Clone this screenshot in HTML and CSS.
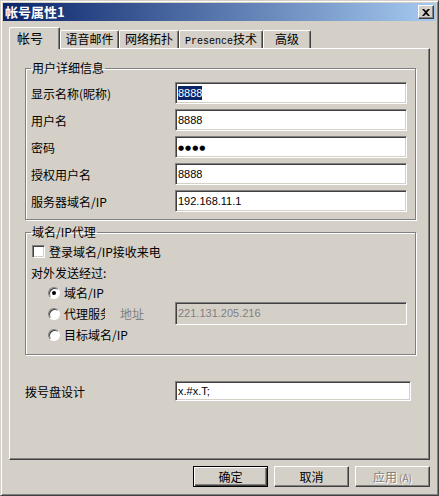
FILE: index.html
```html
<!doctype html>
<html lang="zh-CN">
  <head>
    <meta charset="UTF-8" />
    <title>帐号属性1</title>
    <link rel="stylesheet" href="styles.css">
  </head>
  <body>
    <div class="window">
      <div class="titlebar">
        <span class="title">帐号属性1</span>
        <span class="close">
          <svg width="8" height="7" viewBox="0 0 8 7"><path d="M0 0h2l2 2 2-2h2L5 3.5 8 7H6L4 5 2 7H0l3-3.5z" fill="#000"/></svg>
        </span>
      </div>
      <div class="content">
        <div class="tabs">
          <div class="tab active">帐号</div>
          <div class="tab t2">语音邮件</div>
          <div class="tab t3">网络拓扑</div>
          <div class="tab t4"><span class="mono">Presence</span>技术</div>
          <div class="tab t5">高级</div>
        </div>
        <div class="panel">
          <fieldset class="group first">
            <legend>用户详细信息</legend>
            <div class="rows">
              <label>显示名称(昵称)</label>
              <div class="field"><span class="selected">8888</span></div>
              <label>用户名</label>
              <div class="field">8888</div>
              <label>密码</label>
              <div class="field"><span class="dots">●●●●</span></div>
              <label>授权用户名</label>
              <div class="field">8888</div>
              <label>服务器域名/IP</label>
              <div class="field">192.168.11.1</div>
            </div>
          </fieldset>
          <fieldset class="group second">
            <legend>域名/IP代理</legend>
            <div class="check-row">
              <span class="checkbox"></span>
              <span>登录域名/IP接收来电</span>
            </div>
            <div class="send-label">对外发送经过:</div>
            <div class="radio-row">
              <span class="radio checked"></span>
              <span>域名/IP</span>
            </div>
            <div class="radio-row">
              <span class="radio"></span>
              <span class="clip">代理服务器</span>
              <span class="muted">地址</span>
              <div class="field disabled">221.131.205.216</div>
            </div>
            <div class="radio-row">
              <span class="radio"></span>
              <span>目标域名/IP</span>
            </div>
          </fieldset>
          <div class="dial-row">
            <label>拨号盘设计</label>
            <div class="field short">x.#x.T;</div>
          </div>
        </div>
        <div class="buttons">
          <button class="default">确定</button>
          <button>取消</button>
          <button class="disabled-btn">应用<small>(A)</small></button>
        </div>
      </div>
    </div>
  </body>
</html>
```
FILE: styles.css
```css
* {
  box-sizing: border-box;
}
body {
  margin: 0;
  font-family: "Noto Sans CJK SC", "Liberation Sans", sans-serif;
  font-size: 12px;
  color: #000;
  background: #d4d0c8;
}
.window {
  width: 439px;
  height: 496px;
  background: #d4d0c8;
  border: 1px solid;
  border-color: #d4d0c8 #404040 #404040 #d4d0c8;
  box-shadow: inset 1px 1px #fff, inset -1px -1px #808080;
  padding: 2px;
  display: flex;
  flex-direction: column;
}
.titlebar {
  height: 18px;
  display: flex;
  align-items: center;
  justify-content: space-between;
  background: linear-gradient(to right, #0a246a, #a6caf0);
  padding: 0 2px 0 2px;
}
.title {
  color: #fff;
  font-weight: bold;
  font-size: 13px;
  line-height: 18px;
}
.close {
  width: 16px;
  height: 14px;
  display: flex;
  align-items: center;
  justify-content: center;
  background: #d4d0c8;
  border: 1px solid;
  border-color: #fff #404040 #404040 #fff;
  box-shadow: inset -1px -1px #808080;
}
.content {
  padding: 6px 6px 0 6px;
}
.tabs {
  display: flex;
  align-items: flex-end;
  height: 21px;
}
.tab {
  height: 18px;
  line-height: 16px;
  font-size: 12px;
  text-align: center;
  white-space: nowrap;
  border-top: 1px solid #fff;
  border-left: 1px solid #fff;
  border-right: 1px solid #404040;
  border-radius: 2px 2px 0 0;
  box-shadow: inset -1px 0 #808080;
}
.tab.active {
  width: 51px;
  height: 22px;
  margin-bottom: -1px;
  position: relative;
  z-index: 1;
  background: #d4d0c8;
  font-size: 13px;
  line-height: 19px;
  text-align: left;
  padding-left: 7px;
}
.mono {
  font-family: "Liberation Mono", monospace;
  font-size: 10px;
}
.t2 {
  width: 59px;
}
.t3 {
  width: 60px;
}
.t4 {
  width: 84px;
}
.t5 {
  width: 48px;
}
.panel {
  height: 412px;
  border: 1px solid;
  border-color: #fff #404040 #404040 #fff;
  box-shadow: inset -1px -1px #808080;
  padding-top: 12px;
}
.group {
  margin: 0 13px 0 15px;
  border: 1px solid #808080;
  box-shadow: 1px 1px 0 #fff, inset 1px 1px 0 #fff;
  min-inline-size: 0;
}
.group legend {
  padding: 0 1px;
  line-height: 14px;
  font-size: 12px;
}
.group.first {
  padding: 7px 8px 7px 5px;
}
.group.second {
  margin-top: 5px;
  padding: 4px 8px 9px 5px;
}
.rows {
  display: grid;
  grid-template-columns: 144px 1fr;
  row-gap: 5px;
  align-items: center;
}
.field {
  height: 22px;
  background: #fff;
  border: 1px solid;
  border-color: #808080 #fff #fff #808080;
  box-shadow: inset 1px 1px #404040, inset -1px -1px #d4d0c8;
  font-family: "Liberation Sans", sans-serif;
  font-size: 11px;
  line-height: 20px;
  padding: 0 2px;
  white-space: nowrap;
}
.selected {
  background: #0a246a;
  color: #fff;
  padding: 1px 0;
}
.dots {
  font-family: "DejaVu Sans", sans-serif;
  font-size: 7px;
  letter-spacing: 1px;
  vertical-align: 1px;
}
.check-row {
  height: 16px;
  display: flex;
  align-items: center;
  gap: 4px;
  padding-left: 1px;
}
.checkbox {
  width: 13px;
  height: 13px;
  background: #fff;
  border: 1px solid;
  border-color: #808080 #fff #fff #808080;
  box-shadow: inset 1px 1px #404040, inset -1px -1px #d4d0c8;
}
.send-label {
  height: 16px;
  line-height: 16px;
  margin-top: 6px;
  margin-bottom: 1px;
}
.radio-row {
  height: 21px;
  display: flex;
  align-items: center;
  gap: 4px;
  padding-left: 17px;
}
.radio {
  width: 12px;
  height: 12px;
  border-radius: 50%;
  background: #fff;
  border: 1px solid;
  border-color: #808080 #fff #fff #808080;
  box-shadow: inset 1px 1px #404040;
  display: flex;
  align-items: center;
  justify-content: center;
}
.radio.checked::after {
  content: "";
  width: 4px;
  height: 4px;
  border-radius: 50%;
  background: #000;
}
.clip {
  width: 41px;
  overflow: hidden;
  white-space: nowrap;
}
.muted {
  color: #808080;
  margin-left: 11px;
}
.field.disabled {
  width: 232px;
  height: 23px;
  margin-left: auto;
  background: #d4d0c8;
  color: #808080;
}
.dial-row {
  display: grid;
  grid-template-columns: 150px 1fr;
  align-items: center;
  margin: 26px 18px 0 15px;
}
.field.short {
  height: 20px;
  line-height: 18px;
}
.buttons {
  display: flex;
  justify-content: flex-end;
  gap: 6px;
  margin-top: 6px;
}
.buttons button {
  width: 75px;
  height: 21px;
  padding: 0;
  font-family: "Noto Sans CJK SC", sans-serif;
  font-size: 12px;
  background: #d4d0c8;
  border: 1px solid;
  border-color: #fff #404040 #404040 #fff;
  box-shadow: inset -1px -1px #808080;
}
.buttons button.default {
  border-color: #000;
  box-shadow: inset 1px 1px #fff, inset -1px -1px #404040, inset -2px -2px #808080;
}
.disabled-btn {
  color: #808080;
  text-shadow: 1px 1px #fff;
}
.disabled-btn small {
  font-size: 10px;
  margin-left: 2px;
}
```
